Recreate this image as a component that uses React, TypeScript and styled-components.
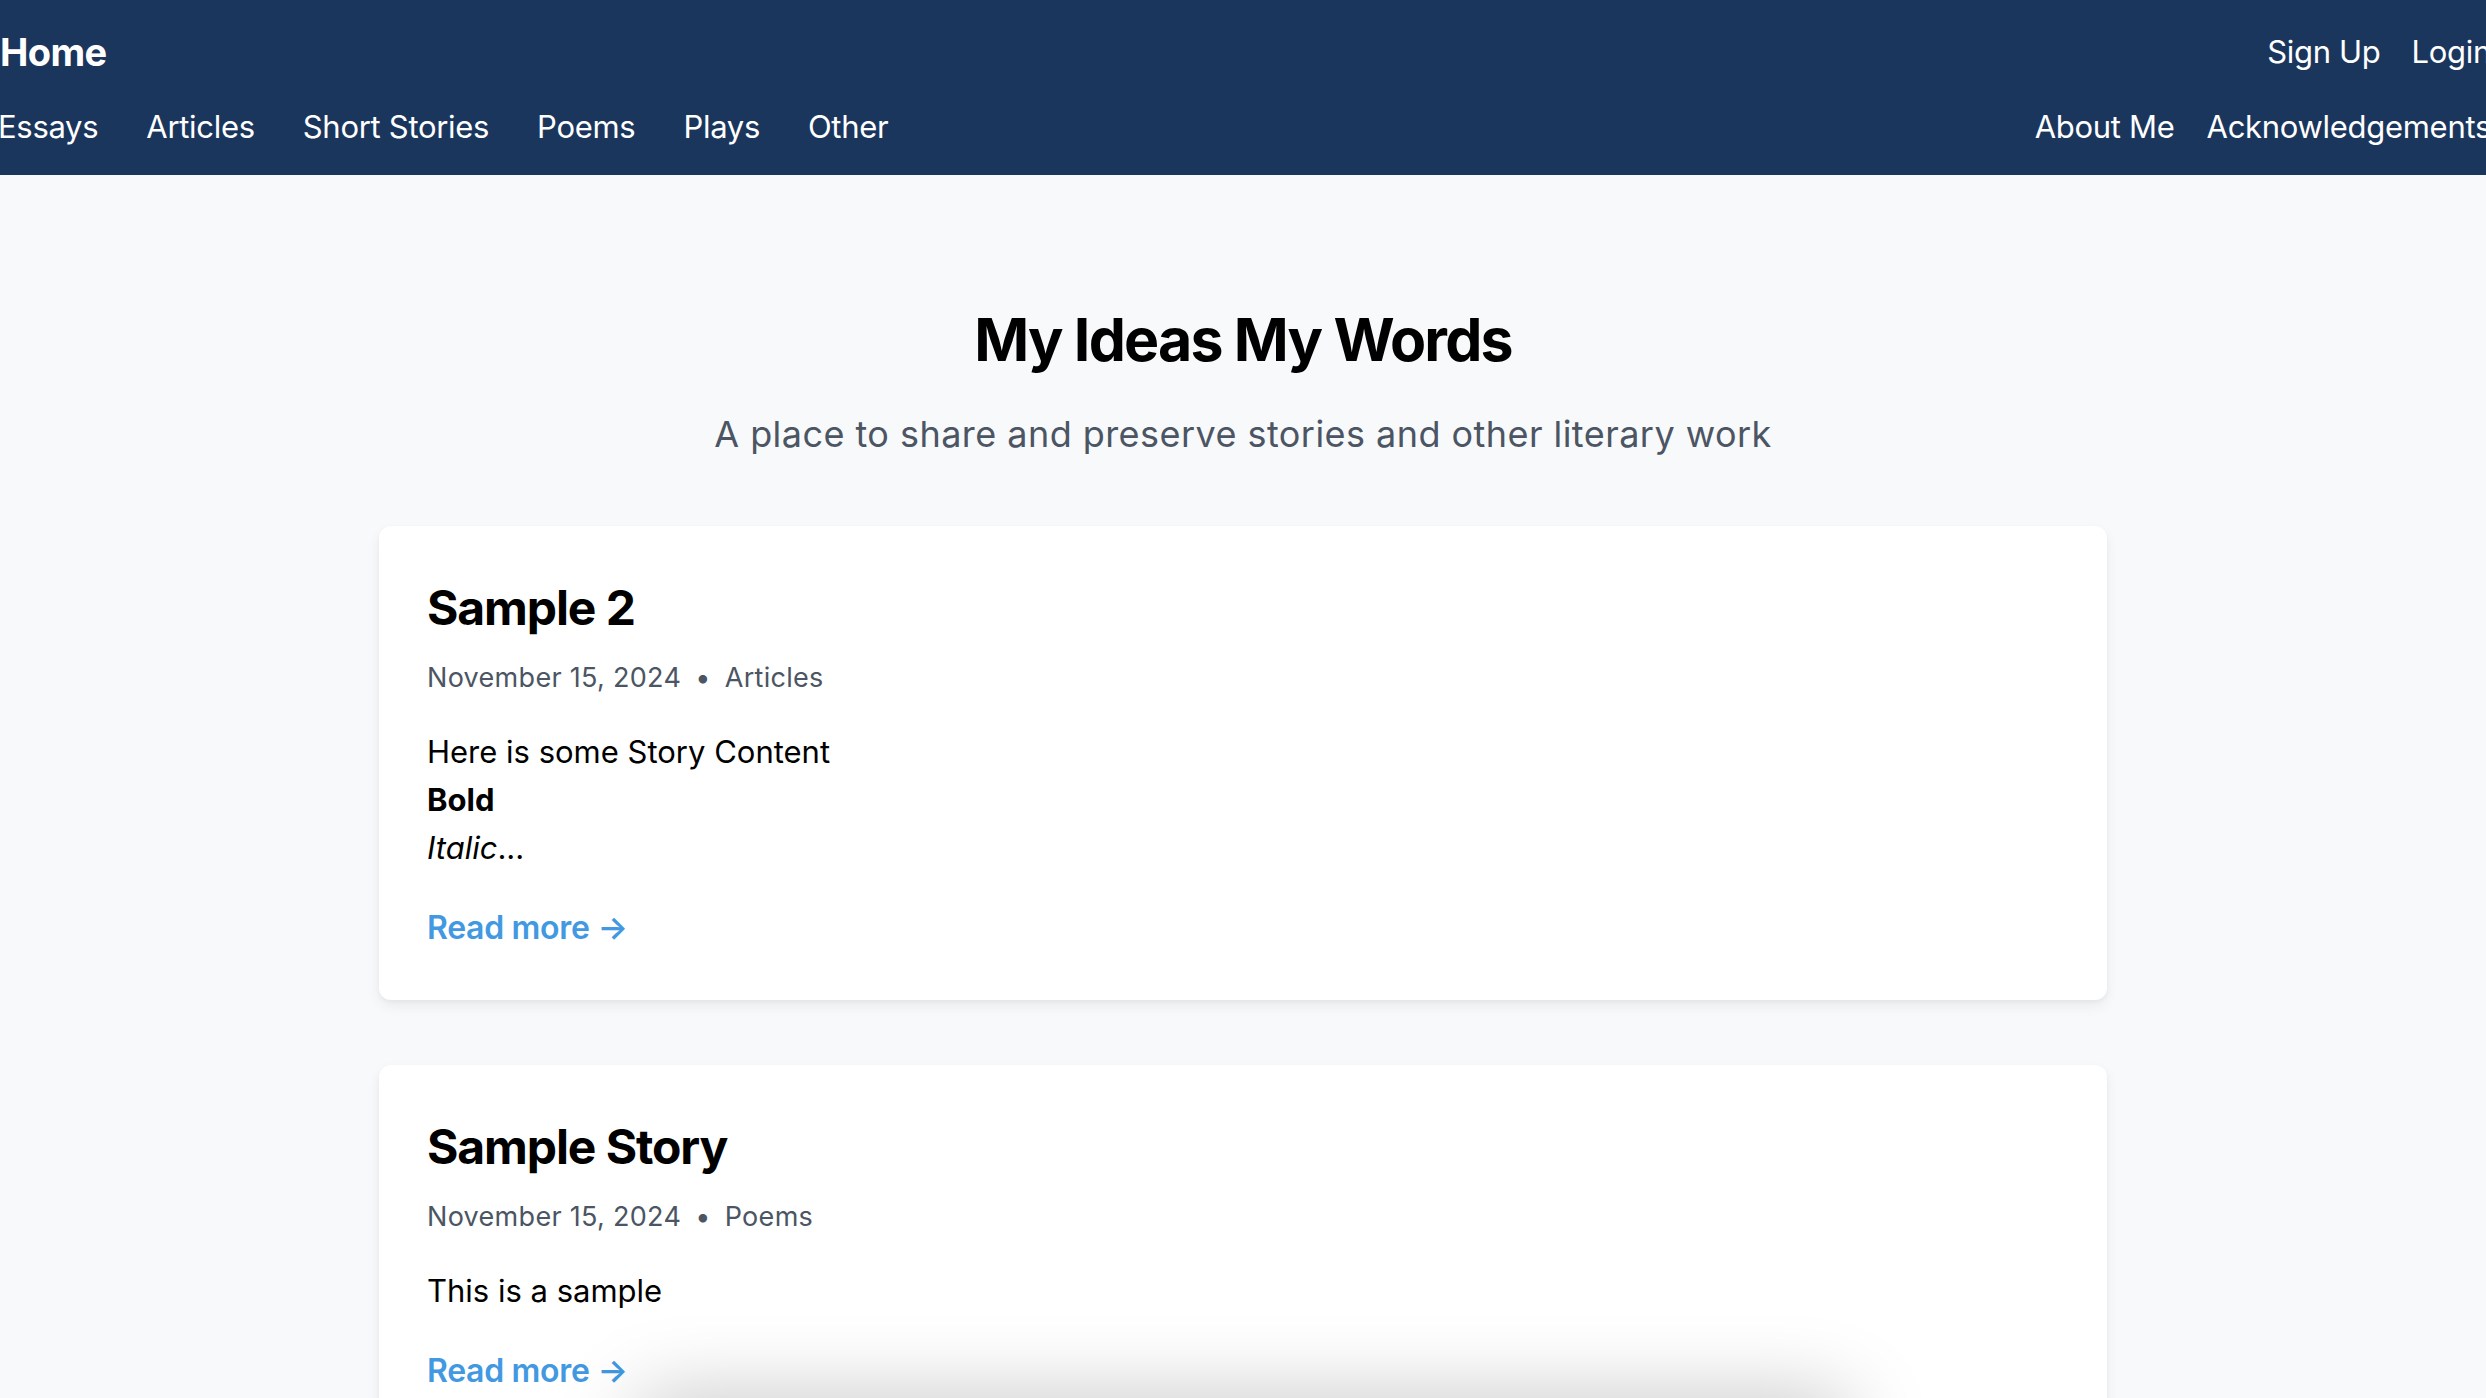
import styled, { createGlobalStyle } from 'styled-components';

const GlobalStyle = createGlobalStyle`
	html, body {
		margin: 0;
		padding: 0;
		overflow: hidden;
		background: #f8f9fb;
		font-family: Inter, "Noto Sans", "Liberation Sans", sans-serif;
		color: #000;
	}
	* {
		box-sizing: border-box;
	}
`;

const Header = styled.header`
	background: #1b365d;
	padding: 24px 0;
	color: #fff;
`;

const HeaderInner = styled.div`
	display: flex;
	flex-direction: column;
	gap: 23px;
	margin: 0 -5px 0 -2px;
`;

const HeaderRow = styled.div`
	display: flex;
	align-items: center;
	justify-content: space-between;
`;

const Brand = styled.a`
	font-size: 38px;
	font-weight: 700;
	line-height: 1.5;
	letter-spacing: -0.6px;
	color: #fff;
	text-decoration: none;
	padding-left: 2px;
`;

const NavGroup = styled.nav<{ $gap: number }>`
	display: flex;
	align-items: center;
	gap: ${(p) => p.$gap}px;
`;

const NavLink = styled.a`
	font-size: 31px;
	line-height: 1.5;
	letter-spacing: -0.3px;
	color: #fff;
	text-decoration: none;
	white-space: nowrap;
`;

const Main = styled.main`
	display: flex;
	flex-direction: column;
	align-items: center;
	padding-top: 130px;
`;

const Title = styled.h1`
	margin: 0;
	font-size: 59px;
	line-height: 1.2;
	font-weight: 700;
	letter-spacing: -1.8px;
`;

const Subtitle = styled.p`
	margin: 32px 0 0;
	font-size: 36px;
	line-height: 1.5;
	letter-spacing: 0.45px;
	color: #4b5563;
`;

const CardList = styled.div`
	display: flex;
	flex-direction: column;
	gap: 65px;
	width: 1728px;
	margin-top: 65px;
`;

const Card = styled.article`
	background: #fff;
	border-radius: 12px;
	padding: 48px;
	box-shadow: 0 6px 14px rgba(0, 0, 0, 0.06), 0 2px 5px rgba(0, 0, 0, 0.04);
`;

const CardTitle = styled.h2`
	margin: 0;
	font-size: 48px;
	line-height: 1.2;
	font-weight: 700;
	letter-spacing: -1.1px;
	padding-top: 5px;
`;

const Meta = styled.div`
	display: flex;
	align-items: center;
	gap: 14px;
	margin-top: 21px;
	font-size: 27px;
	line-height: 1.5;
	letter-spacing: 0.3px;
	color: #4b5563;
`;

const Body = styled.div`
	margin-top: 30px;
	font-size: 31px;
	line-height: 48px;

	p {
		margin: 0;
	}
`;

const ReadMore = styled.a`
	display: inline-block;
	margin-top: 32px;
	font-size: 32px;
	line-height: 1.5;
	font-weight: 600;
	letter-spacing: -0.3px;
	color: #4299e1;
	text-decoration: none;
`;

const BottomShade = styled.div`
	position: fixed;
	left: 50%;
	bottom: -50px;
	transform: translateX(-50%);
	width: 1200px;
	height: 40px;
	border-radius: 20px;
	background: #fff;
	box-shadow: 0 0 80px 10px rgba(0, 0, 0, 0.25);
`;

type Story = {
	title: string;
	date: string;
	category: string;
	content: React.ReactNode;
};

const stories: Story[] = [
	{
		title: 'Sample 2',
		date: 'November 15, 2024',
		category: 'Articles',
		content: (
			<>
				<p>Here is some Story Content</p>
				<p>
					<strong>Bold</strong>
				</p>
				<p>
					<em>Italic</em>...
				</p>
			</>
		),
	},
	{
		title: 'Sample Story',
		date: 'November 15, 2024',
		category: 'Poems',
		content: <p>This is a sample</p>,
	},
];

const App = () => {
	return (
		<>
			<GlobalStyle />
			<Header>
				<HeaderInner>
					<HeaderRow>
						<Brand href="#">Home</Brand>
						<NavGroup $gap={31}>
							<NavLink href="#">Sign Up</NavLink>
							<NavLink href="#">Login</NavLink>
						</NavGroup>
					</HeaderRow>
					<HeaderRow>
						<NavGroup $gap={48}>
							<NavLink href="#">Essays</NavLink>
							<NavLink href="#">Articles</NavLink>
							<NavLink href="#">Short Stories</NavLink>
							<NavLink href="#">Poems</NavLink>
							<NavLink href="#">Plays</NavLink>
							<NavLink href="#">Other</NavLink>
						</NavGroup>
						<NavGroup $gap={32}>
							<NavLink href="#">About Me</NavLink>
							<NavLink href="#">Acknowledgements</NavLink>
						</NavGroup>
					</HeaderRow>
				</HeaderInner>
			</Header>
			<Main>
				<Title>My Ideas My Words</Title>
				<Subtitle>A place to share and preserve stories and other literary work</Subtitle>
				<CardList>
					{stories.map((s) => (
						<Card key={s.title}>
							<CardTitle>{s.title}</CardTitle>
							<Meta>
								<span>{s.date}</span>
								<span>•</span>
								<span>{s.category}</span>
							</Meta>
							<Body>{s.content}</Body>
							<ReadMore href="#">Read more →</ReadMore>
						</Card>
					))}
				</CardList>
			</Main>
			<BottomShade />
		</>
	);
};

export default App;
